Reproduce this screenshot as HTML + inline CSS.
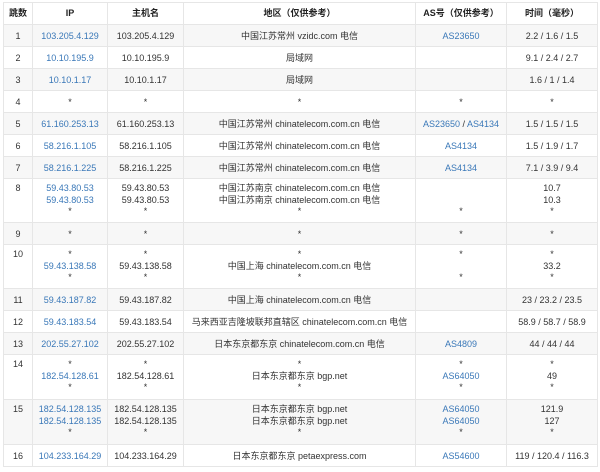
<!DOCTYPE html><html><head><meta charset="utf-8"><style>
body{margin:0;background:#fff;width:600px;height:472px;overflow:hidden}
table{position:absolute;left:3px;top:2px;border-collapse:collapse;width:594px;table-layout:fixed;font-family:"Liberation Sans","Noto Sans CJK SC",sans-serif;font-size:9px;color:#333}
td,th{border:1px solid #e6e6e6;text-align:center;vertical-align:top;padding:5px 0 0;line-height:12px;white-space:nowrap;overflow:hidden}
th{font-weight:bold;height:17px;padding-top:4px;color:#222}
tr.g td{background:#f7f7f7}
tr.s td{height:16px}
tr.t td{height:39px;line-height:11.5px;padding-top:4px}
tr.t2 td{height:40px}
tr.l td{height:16px;padding-top:5px}
a{color:#3a78b8;text-decoration:none}
</style></head><body><table>
<colgroup><col style="width:29px"><col style="width:75px"><col style="width:76px"><col style="width:232px"><col style="width:91px"><col style="width:91px"></colgroup>
<tr><th>跳数</th><th>IP</th><th>主机名</th><th>地区（仅供参考）</th><th>AS号（仅供参考）</th><th>时间（毫秒）</th></tr>
<tr class="s g"><td>1</td><td><a>103.205.4.129</a></td><td>103.205.4.129</td><td>中国江苏常州 vzidc.com 电信</td><td><a>AS23650</a></td><td>2.2 / 1.6 / 1.5</td></tr>
<tr class="s"><td>2</td><td><a>10.10.195.9</a></td><td>10.10.195.9</td><td>局域网</td><td></td><td>9.1 / 2.4 / 2.7</td></tr>
<tr class="s g"><td>3</td><td><a>10.10.1.17</a></td><td>10.10.1.17</td><td>局域网</td><td></td><td>1.6 / 1 / 1.4</td></tr>
<tr class="s"><td>4</td><td>*</td><td>*</td><td>*</td><td>*</td><td>*</td></tr>
<tr class="s g"><td>5</td><td><a>61.160.253.13</a></td><td>61.160.253.13</td><td>中国江苏常州 chinatelecom.com.cn 电信</td><td><a>AS23650</a> / <a>AS4134</a></td><td>1.5 / 1.5 / 1.5</td></tr>
<tr class="s"><td>6</td><td><a>58.216.1.105</a></td><td>58.216.1.105</td><td>中国江苏常州 chinatelecom.com.cn 电信</td><td><a>AS4134</a></td><td>1.5 / 1.9 / 1.7</td></tr>
<tr class="s g"><td>7</td><td><a>58.216.1.225</a></td><td>58.216.1.225</td><td>中国江苏常州 chinatelecom.com.cn 电信</td><td><a>AS4134</a></td><td>7.1 / 3.9 / 9.4</td></tr>
<tr class="t"><td>8</td><td><a>59.43.80.53</a><br><a>59.43.80.53</a><br>*</td><td>59.43.80.53<br>59.43.80.53<br>*</td><td>中国江苏南京 chinatelecom.com.cn 电信<br>中国江苏南京 chinatelecom.com.cn 电信<br>*</td><td><br><br>*</td><td>10.7<br>10.3<br>*</td></tr>
<tr class="s g"><td>9</td><td>*</td><td>*</td><td>*</td><td>*</td><td>*</td></tr>
<tr class="t"><td>10</td><td>*<br><a>59.43.138.58</a><br>*</td><td>*<br>59.43.138.58<br>*</td><td>*<br>中国上海 chinatelecom.com.cn 电信<br>*</td><td>*<br><br>*</td><td>*<br>33.2<br>*</td></tr>
<tr class="s g"><td>11</td><td><a>59.43.187.82</a></td><td>59.43.187.82</td><td>中国上海 chinatelecom.com.cn 电信</td><td></td><td>23 / 23.2 / 23.5</td></tr>
<tr class="s"><td>12</td><td><a>59.43.183.54</a></td><td>59.43.183.54</td><td>马来西亚吉隆坡联邦直辖区 chinatelecom.com.cn 电信</td><td></td><td>58.9 / 58.7 / 58.9</td></tr>
<tr class="s g"><td>13</td><td><a>202.55.27.102</a></td><td>202.55.27.102</td><td>日本东京都东京 chinatelecom.com.cn 电信</td><td><a>AS4809</a></td><td>44 / 44 / 44</td></tr>
<tr class="t t2"><td>14</td><td>*<br><a>182.54.128.61</a><br>*</td><td>*<br>182.54.128.61<br>*</td><td>*<br>日本东京都东京 bgp.net<br>*</td><td>*<br><a>AS64050</a><br>*</td><td>*<br>49<br>*</td></tr>
<tr class="t t2 g"><td>15</td><td><a>182.54.128.135</a><br><a>182.54.128.135</a><br>*</td><td>182.54.128.135<br>182.54.128.135<br>*</td><td>日本东京都东京 bgp.net<br>日本东京都东京 bgp.net<br>*</td><td><a>AS64050</a><br><a>AS64050</a><br>*</td><td>121.9<br>127<br>*</td></tr>
<tr class="l"><td>16</td><td><a>104.233.164.29</a></td><td>104.233.164.29</td><td>日本东京都东京 petaexpress.com</td><td><a>AS54600</a></td><td>119 / 120.4 / 116.3</td></tr>
</table></body></html>
